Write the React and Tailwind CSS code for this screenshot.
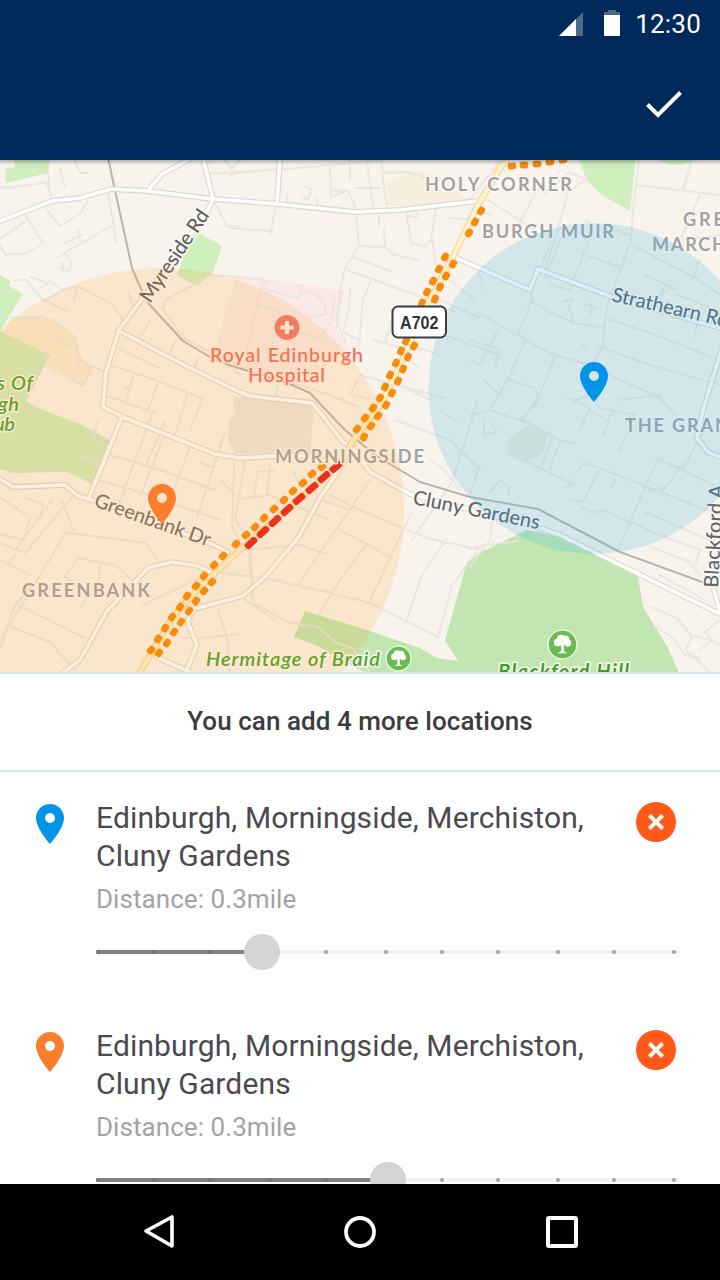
const PIN_PATH =
  'M12 2C8.13 2 5 5.13 5 9c0 5.25 7 13 7 13s7-7.75 7-13c0-3.87-3.13-7-7-7zm0 9.5a2.5 2.5 0 1 1 0-5 2.5 2.5 0 0 1 0 5z';

const BLUE = '#0294e9';
const ORANGE = '#f97f2c';

const minorRoads = [
  'M0 186L5 188L30 185L46 182L52 198',
  'M49 160L48 175L50 190',
  'M60 168L65 187M75 160L80 173L89 173',
  'M46 209L60 226L80 214L87 201',
  'M26 216L43 243L26 254L5 254L0 245M0 239L26 221',
  'M108 190L116 242M58 257L114 224M64 243L82 235M78 229L80 240M66 254L72 263L69 271L58 267M62 262L64 272',
  'M15 281L25 279L43 300L70 312M30 277L48 283L40 288M50 281L60 288',
  'M45 301L62 290L77 286L112 304L124 321M78 287L74 300',
  'M128 293L133 305M150 320L140 338M176 340L169 355M198 357L194 368',
  'M119 349L161 369M109 365L146 377L203 398L190 430M133 377L126 402M157 385L147 413M107 396L155 413M123 387L130 390M53 338L72 347M10 318L40 317L55 321L75 337L80 358L88 365L103 371M80 358L72 380L83 386L92 370',
  'M213 272L192 286L167 299L162 308L185 339L212 353L240 375',
  'M213 200L227 226L240 226M208 275L240 277L270 281',
  'M205 174L240 172M200 165L212 162M225 160L232 169L240 160',
  'M276 204L270 236M230 228L271 231M230 175L240 172L300 168L380 160',
  'M330 168L331 197L347 190L354 203L356 215L359 246L345 268L340 292L337 326',
  'M331 190L345 191M350 160L350 180M367 162L373 207M382 160L383 180L387 205',
  'M382 173L410 172L430 180M355 188L380 188M305 187L312 189L308 199L303 197M287 194L287 202M317 198L317 206',
  'M379 214L379 225M384 228L385 247M359 246L385 247L394 255L420 260M353 257L390 271M347 270L430 300L455 312',
  'M406 211L411 243L424 246L431 240L436 209M432 240L436 264M408 216L417 217L417 210M450 218L478 220',
  'M371 280L363 300L359 346M350 287L349 310L343 332L359 340M396 308L385 343M373 340L395 346L420 350M405 343L440 355M400 352L418 367',
  'M263 278L267 290L299 298L301 291L314 293L324 303L327 314L312 317L305 312',
  'M343 291L336 320L346 343M262 285L247 349M335 295L332 320L322 335M258 305L285 315L290 330L325 340',
  'M290 382L330 395L356 406M278 385L276 396M358 379L350 394L370 399M360 375L445 398M400 385L430 400',
  'M152 414L118 507M165 422L147 462M187 396L175 434M164 436L141 495M190 447L162 520M225 433L197 518M111 455L160 470L215 490M91 478L140 492L220 520M200 462L213 468L222 440M97 422L93 440L108 446M81 456L100 462',
  'M235 440L232 527L240 540M220 480L240 499M240 499L270 495L330 520M245 460L235 520L250 540L250 575M257 475L254 495M270 465L267 494M257 472L275 470M293 470L300 485',
  'M310 480L320 500L352 510M370 480L300 582M340 530L392 558M330 495L360 510L395 525L430 539L478 549',
  'M245 550L300 545L325 553M366 545L340 580L319 614M412 512L370 600M430 460L445 470L460 490M446 540L422 575L405 625',
  'M230 575L260 577L310 588L370 603L438 637L452 585L478 550',
  'M250 540L253 603L290 623L318 627L336 643L352 648L370 672',
  'M478 400L452 482L412 540M395 420L450 440L480 470M440 410L457 422',
  'M62 500L74 532M66 532L36 582L0 640M36 582L15 605L0 650M62 532L145 543L158 560M78 558L65 577L83 590M78 558L115 565L132 580M100 562L99 580L80 608M18 605L85 638M8 626L50 642L75 670',
  'M0 497L30 518L24 540L0 534M25 498L43 504L40 518M52 500L15 550M72 497L25 553L0 543M0 560L30 575M10 562L15 555',
  'M143 605L212 572L240 574M218 611L227 637L230 672M183 638L200 638L240 634M240 596L275 620',
  'M500 160L470 200M488 200L535 230M540 185L520 222M560 170L545 195L568 172L588 180M585 180L568 193L560 222L545 270M551 242L533 285M560 240L545 278',
  'M639 160L633 210L631 240L606 310L603 345L590 370M637 185L720 195M692 160L683 190M700 195L680 240L720 235M632 245L694 277L720 295M700 260L692 280M617 230L631 236M585 220L593 224M594 226L570 290L550 285M586 255L620 267M573 280L574 280',
  'M530 290L532 300L518 335M532 300L545 310L574 323L605 328M582 345L586 350M563 302L572 298L568 308L573 316L572 324M585 304L597 308M592 303L590 316M605 318L650 333L715 358M600 347L650 365L720 385',
  'M478 312L500 325L540 348L555 355L590 365L620 380L660 398L675 415M500 326L480 365L470 360M524 342L510 375L490 410M555 357L535 405L520 420M470 340L500 350L495 368M484 380L500 395M509 380L535 388L538 398L522 420',
  'M645 275L674 288M665 285L662 293L674 288M662 289L660 297M676 294L720 312M700 310L694 338M478 210L490 215',
  'M567 397L590 408L580 430M520 418L560 440L575 444M470 415L490 410L525 422M484 422L484 435L497 432L490 422M560 440L550 470M590 410L610 422M612 412L603 435M575 400L590 395L600 408L635 415L620 450M620 400L660 395M553 436L542 465',
  'M527 462L575 485L560 488M575 474L583 463L600 468L650 488L720 515M600 470L582 502L570 500M615 480L612 487M582 507L592 513L602 510L660 535L700 550L695 565M657 460L618 550M659 460L680 468L660 495M658 459L720 488M705 430L683 468M648 492L665 487M645 512L720 545M650 547L690 562M660 575L705 600M688 560L700 575',
  'M470 495L480 465M490 492L500 480L510 487L508 495',
  'M652 607L680 620L692 636L686 650L710 672M655 627L672 637L685 655L700 658M720 620L705 632L712 640L700 650M678 620L690 635L710 640L720 645M470 549L485 545L518 541M470 567L490 540L492 520',
  'M450 280L475 300M430 330L500 355M440 300L480 318M480 275L483 290',
];

const mainRoads = [
  'M0 221L52 201L80 198L111 189L148 191L213 199L278 204L355 212L400 210L478 201',
  'M150 188L162 174L190 159',
  'M203 158L213 199L207 212L140 302L133 311L119 330L106 372L103 407L123 417L170 436L215 454L240 458L275 456L330 455',
  'M280 158L277 203',
  'M122 417L88 500',
  'M119 331L190 368L240 392L250 396L312 403L322 415L343 442L352 447L370 472L410 494L540 528L560 535L600 555L720 614',
  'M0 479L13 487L65 485L78 496L92 500L212 544L228 552',
  'M60 675L80 660L107 611L148 568L172 562L198 566L212 573',
  'M188 620L194 609L243 596L265 577L298 538L320 498L347 458',
  'M190 612L188 623L197 645L186 672M156 657L190 672',
  'M454 257L530 290L538 269L612 297L720 328',
  'M722 348L703 410L697 438L708 452L722 458',
  'M714 590L720 612',
];

const A702 =
  'M138 675L173 617L200 587L240 550L342 462L352 442L377 410L387 393L410 343L427 305L453 257L478 205L500 168L508 158';

const trafficLines = [
  [[151,650],[158,639],[165,628],[172,617],[180,607],[187,596],[196,586],[204,576],[214,565],[223,556],[236,544],[246,535],[255,527],[264,518],[274,509],[284,500],[293,491],[303,483],[312,474],[322,467]],
  [[357,429],[365,418],[373,408],[380,398],[385,387],[390,375],[396,363],[401,351],[406,341]],
  [[422,303],[427,292],[433,281],[439,269],[445,257]],
  [[159,653],[167,643],[174,632],[181,622],[189,611],[196,601],[204,591],[212,582]],
  [[364,437],[371,426],[378,416],[386,405],[392,393],[398,381],[403,369],[408,357],[414,346]],
  [[435,299],[440,287],[446,276],[453,264]],
  [[469,233],[475,222],[481,211]],
  [[512,166],[524,165],[537,164],[550,162],[563,160]],
];

const jam = [[251,543],[263,532],[275,521],[287,510],[299,499],[312,488],[324,477],[336,467]];

function Dashes({ points, length, color }) {
  return points.map(([x, y], i) => {
    const a = points[Math.max(0, i - 1)];
    const b = points[Math.min(points.length - 1, i + 1)];
    const angle = (Math.atan2(b[1] - a[1], b[0] - a[0]) * 180) / Math.PI;
    return (
      <rect
        key={i}
        x={-length / 2}
        y={-3.4}
        width={length}
        height={6.8}
        rx={2.6}
        fill={color}
        transform={`translate(${x} ${y}) rotate(${angle})`}
      />
    );
  });
}

function Label({ x, y, w, size = 18.2, fill = '#a3a2a2', weight = 700, rotate = 0, italic, halo = '#fbf8f3', children }) {
  return (
    <text
      x={x}
      y={y}
      textLength={w}
      fontSize={size}
      fontWeight={weight}
      fontStyle={italic ? 'italic' : 'normal'}
      fill={fill}
      stroke={halo}
      strokeWidth="3"
      strokeLinejoin="round"
      paintOrder="stroke"
      transform={rotate ? `rotate(${rotate} ${x} ${y})` : undefined}
    >
      {children}
    </text>
  );
}

function TreeBadge({ x, y, r }) {
  return (
    <g transform={`translate(${x} ${y})`}>
      <circle r={r} fill="#6cbb4e" stroke="#e4f5da" strokeWidth="1.6" />
      <g transform={`scale(${r / 14})`} fill="#fff">
        <circle cx="-4.5" cy="-2" r="3.8" />
        <circle cx="-1.5" cy="-5.5" r="3.8" />
        <circle cx="3" cy="-5" r="3.6" />
        <circle cx="5" cy="-1.5" r="3.4" />
        <path d="M-3 -2H4L1.3 1V6.5L4.5 8.5H-5L-1.3 6.5V1Z" />
      </g>
    </g>
  );
}

function MapPin({ x, y, color }) {
  return <path d={PIN_PATH} fill={color} transform={`translate(${x - 24} ${y - 4}) scale(2)`} />;
}

function MapView() {
  return (
    <svg viewBox="0 160 720 512" className="block h-[512px] w-full shrink-0 font-[Lato,sans-serif]">
      <defs>
        <linearGradient id="headerShade" x1="0" y1="0" x2="0" y2="1">
          <stop offset="0" stopColor="#000" stopOpacity="0.28" />
          <stop offset="1" stopColor="#000" stopOpacity="0" />
        </linearGradient>
      </defs>
      <rect x="0" y="160" width="720" height="512" fill="#f8f4ed" />

      <g fill="#cfefbd">
        <path d="M5 169L15 167L14 158H50L48 173L6 183Z" />
        <path d="M197 232L222 246L213 272L197 286L177 275L186 250Z" />
        <path d="M0 275L10 281L9 286L23 294L0 331Z" />
        <path d="M578 158H636L630 211L600 194L587 180Z" />
        <path d="M653 158L668 164L680 165L705 158Z" />
      </g>
      <path d="M5 331L12 316L55 321L74 338L80 360L92 368L83 386L48 368L0 345Z" fill="#f7ebd6" />
      <path d="M0 331L50 355L26 401L43 410L80 424L110 440L92 484L67 472L12 473L0 469Z" fill="#d2ebbe" />
      <path d="M387 183L410 172L430 172L457 184L465 202L388 206Z" fill="#f7efdd" />
      <path d="M235 278L268 280L343 290L334 325L350 351L330 352L322 378L290 385L213 360Z" fill="#fae9e7" />
      <path d="M233 396L310 404L314 412L310 452L234 454L228 440L229 420L234 414Z" fill="#ebe6df" />
      <g fill="#c1e6b1">
        <path d="M445 640L460 587L467 562L480 553L527 530L560 537L595 554L638 577L643 607L668 648L679 673H478L458 661Z" />
        <path d="M305 611L370 631L420 648L437 658L458 661L482 673H366L345 662L320 647L294 637Z" />
      </g>
      <path d="M508 440L528 425L548 433L543 452L526 463L508 456Z" fill="#eceadb" />

      <g fill="none" strokeLinejoin="round" strokeLinecap="round">
        <path d={minorRoads.join('')} stroke="#e7e4df" strokeWidth="2" opacity="0.85" />
        <path
          d="M108 158L115 190L132 268L141 289L149 304L183 341L210 357L232 366L290 384L310 393L325 409L345 430L375 455L420 482L440 488L470 497L538 509L620 552L705 583"
          stroke="#b9b5b1"
          strokeWidth="2"
        />
        <path d={mainRoads.join('')} stroke="#dfd8d1" strokeWidth="5.8" />
        <path d={mainRoads.join('')} stroke="#fff" strokeWidth="3.6" />
        <path d={A702} stroke="#f2cd9c" strokeWidth="6.4" />
        <path d={A702} stroke="#fff1c6" strokeWidth="4.6" />
      </g>

      {trafficLines.map((line, i) => (
        <Dashes key={i} points={line} length={8.6} color="#f78b0a" />
      ))}
      <Dashes points={jam} length={14} color="#e5231c" />

      <Label x={425} y={190.5} w={147}>HOLY CORNER</Label>
      <Label x={482} y={238} w={132}>BURGH MUIR</Label>
      <Label x={683} y={225.5} w={41}>GRE</Label>
      <Label x={652} y={250.5} w={74}>MARCH</Label>
      <Label x={625} y={431.5} w={104}>THE GRAN</Label>
      <Label x={275} y={462.5} w={149}>MORNINGSIDE</Label>
      <Label x={22} y={596.5} w={128}>GREENBANK</Label>
      <Label x={150} y={304} w={107} size={20} weight={500} fill="#5f5f62" rotate={-56}>Myreside Rd</Label>
      <Label x={93} y={506} w={122} size={20} weight={500} fill="#77716d" rotate={19.5}>Greenbank Dr</Label>
      <Label x={412} y={504} w={129} size={20} weight={500} fill="#626468" rotate={11.3}>Cluny Gardens</Label>
      <Label x={611} y={301} w={119} size={20} weight={500} fill="#5f686f" rotate={12.7}>Strathearn Rd</Label>
      <Label x={718} y={588} w={103} size={20} weight={500} fill="#626468" rotate={-87}>Blackford A</Label>

      <circle cx="287" cy="327.5" r="12.5" fill="#f0796e" />
      <path d="M280.500 327.500H293.500M287 321V334" stroke="#fdf0e8" strokeWidth="4" />
      <Label x={210} y={362} w={153} size={19.5} weight={500} fill="#ee6b5e" halo="#fdeae2">Royal Edinburgh</Label>
      <Label x={248} y={381.5} w={77} size={19.5} weight={500} fill="#ee6b5e" halo="#fdeae2">Hospital</Label>

      <g>
        <Label x={206} y={666} w={174} size={20} weight={600} italic fill="#4da32b">Hermitage of Braid</Label>
        <Label x={498} y={678.5} w={131} size={20} weight={700} italic fill="#3f9f25">Blackford Hill</Label>
        <Label x={-3} y={389.5} w={36} size={20} weight={600} italic fill="#4da32b">s Of</Label>
        <Label x={-2} y={411} w={21} size={20} weight={600} italic fill="#4da32b">gh</Label>
        <Label x={-6} y={430.5} w={21} size={20} weight={600} italic fill="#4da32b">ub</Label>
      </g>
      <TreeBadge x={398.500} y={658.500} r={12.5} />
      <TreeBadge x={562.500} y={644.500} r={14.5} />

      <circle cx="162" cy="510" r="242" fill="#ff9d18" fillOpacity="0.15" />
      <circle cx="594" cy="388.500" r="165.500" fill="#3fb3e8" fillOpacity="0.2" />

      <rect x="392.500" y="306.500" width="53.500" height="31" rx="5.500" fill="#fff" stroke="#3c3c40" strokeWidth="2" />
      <text
        x="400"
        y="328.5"
        textLength="38.500"
        lengthAdjust="spacingAndGlyphs"
        fontSize="18.5"
        fontWeight="700"
        fill="#333338"
        className="font-['Liberation_Sans',sans-serif]"
      >
        A702
      </text>

      <MapPin x={594} y={362} color={BLUE} />
      <MapPin x={162} y={484} color={ORANGE} />
      <rect x="0" y="160" width="720" height="5" fill="url(#headerShade)" />
    </svg>
  );
}

const TICKS = [98, 154, 210, 270, 326, 386, 442, 498, 558, 614, 674];

function Slider({ value }) {
  return (
    <div className="relative h-9 w-[584px]">
      <div className="absolute inset-x-0 top-4 h-1 rounded-full bg-[#f1f2f4]" />
      <div className="absolute left-0 top-4 h-1 rounded-full bg-[#828182]" style={{ width: value - 96 }} />
      {TICKS.map((t) => (
        <span
          key={t}
          className={`absolute top-4 size-1 rounded-full ${t < value ? 'bg-[#737274]' : 'bg-[#a1a2a4]'}`}
          style={{ left: t - 98 }}
        />
      ))}
      <span className="absolute top-0 size-9 rounded-full bg-[#d6d4d5]" style={{ left: value - 96 - 18 }} />
    </div>
  );
}

function LocationItem({ color, value }) {
  return (
    <li className="flex h-[228px] shrink-0 pl-9 pr-11 pt-[27px]">
      <svg viewBox="5 2 14 20" className="mt-[5px] h-10 w-7 shrink-0">
        <path d={PIN_PATH} fill={color} />
      </svg>
      <div className="ml-8 w-[500px] shrink-0">
        <p className="whitespace-nowrap text-[30px] leading-[38px] tracking-[0.13px] text-[#4a4a4f]">
          Edinburgh, Morningside, Merchiston,
          <br />
          Cluny Gardens
        </p>
        <p className="mt-[8px] text-[26px] leading-[32px] tracking-[0.06px] text-[#a2a3a6]">Distance: 0.3mile</p>
        <div className="mt-[19px]">
          <Slider value={value} />
        </div>
      </div>
      <button className="ml-auto mt-[3px] flex size-10 shrink-0 items-center justify-center rounded-full bg-[#ff5a17]">
        <svg viewBox="0 0 16 16" className="size-4">
          <path d="M1.400 1.400L14.600 14.600M14.600 1.400L1.400 14.600" stroke="#fff" strokeWidth="4" />
        </svg>
      </button>
    </li>
  );
}

export default function App() {
  return (
    <div className="flex h-[1280px] w-[720px] flex-col overflow-hidden bg-white font-[Roboto,sans-serif]">
      <header className="flex h-40 shrink-0 flex-col bg-[#002a5b] text-white">
        <div className="flex h-12 items-center justify-end pr-[19px]">
          <svg viewBox="0 0 24 24" className="size-6">
            <path d="M0 24L24 0V24Z" fill="#fff" fillOpacity="0.3" />
            <path d="M0 24L17 7V24Z" fill="#fff" />
          </svg>
          <svg viewBox="0 0 16 26" className="ml-[21px] mt-[-2px] h-[26px] w-4">
            <path d="M4 0H12V2H15Q16 2 16 3V5H0V3Q0 2 1 2H4Z" fill="#fff" fillOpacity="0.3" />
            <path d="M0 5H16V25Q16 26 15 26H1Q0 26 0 25Z" fill="#fff" />
          </svg>
          <span className="ml-[15px] text-[26px] leading-none tracking-[0.2px]">12:30</span>
        </div>
        <div className="flex flex-1 items-center justify-end pr-[38px]">
          <svg viewBox="0 0 36 28" className="h-7 w-9">
            <path d="M1.500 14.500L12 25L34.500 2.500" fill="none" stroke="#fff" strokeWidth="4" />
          </svg>
        </div>
      </header>

      <MapView />

      <div className="flex h-[100px] shrink-0 items-center justify-center border-y-2 border-[#d6e4ec] pb-[2px] text-[26px] font-medium tracking-[0.06px] text-[#3c3c3e]">
        You can add 4 more locations
      </div>

      <ul className="flex min-h-0 flex-1 flex-col overflow-hidden">
        <LocationItem color={BLUE} value={262} />
        <LocationItem color={ORANGE} value={388} />
      </ul>

      <nav className="flex h-24 shrink-0 items-center bg-black pl-[143px]">
        <svg viewBox="0 0 32 36" className="h-9 w-8" fill="none" stroke="#fff" strokeWidth="3.600" strokeLinejoin="round">
          <path d="M3 17L29 3V32Z" />
        </svg>
        <svg viewBox="0 0 32 32" className="ml-[169px] size-8" fill="none" stroke="#fff" strokeWidth="3.800">
          <circle cx="16" cy="16" r="14" />
        </svg>
        <svg viewBox="0 0 32 32" className="ml-[170px] size-8" fill="none" stroke="#fff" strokeWidth="4">
          <rect x="2" y="2" width="28" height="28" rx="1" />
        </svg>
      </nav>
    </div>
  );
}
